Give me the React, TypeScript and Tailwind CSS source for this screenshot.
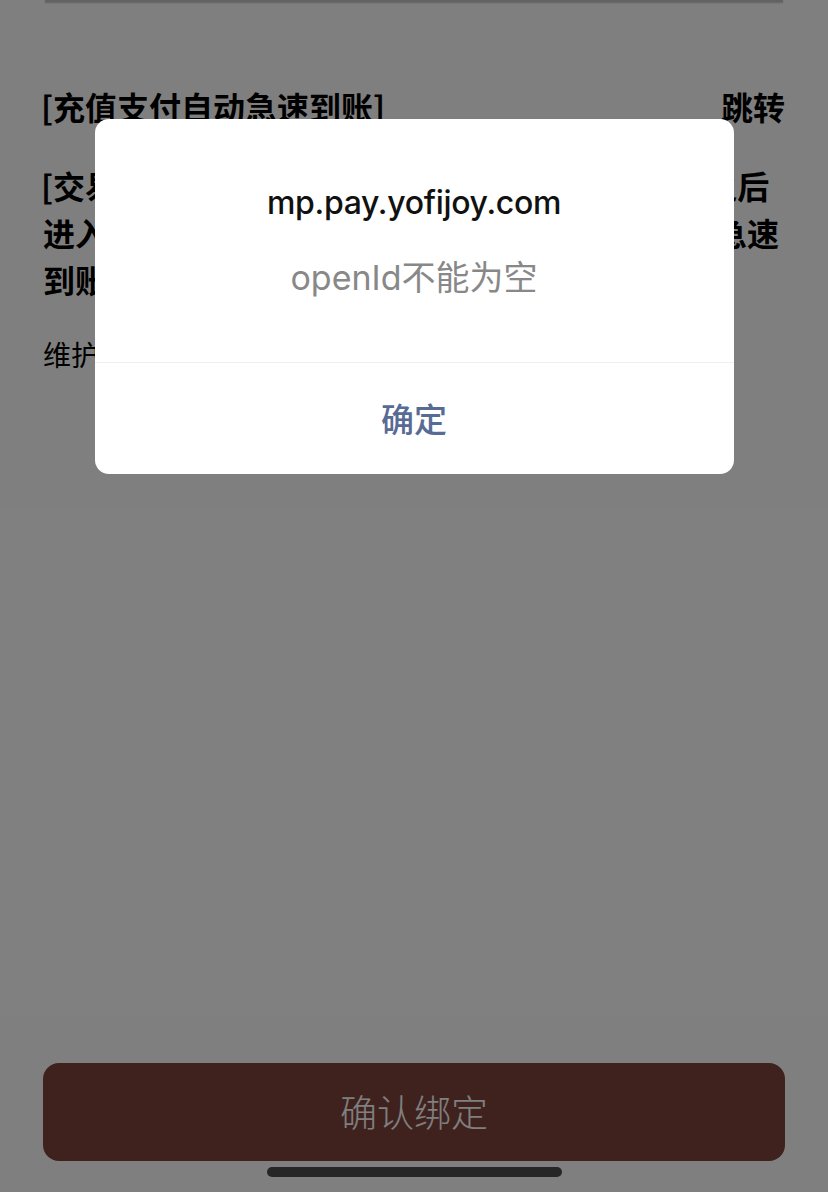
import React from "react";

const cjk = { fontFamily: '"Noto Sans CJK SC", "Noto Sans", sans-serif' };
const latin = { fontFamily: 'Inter, "Noto Sans CJK SC", sans-serif' };

export default function App() {
  return (
    <div className="relative h-[1192px] w-full overflow-hidden bg-white" style={cjk}>
      {/* page */}
      <div className="flex h-full flex-col px-[43px]">
        <div className="mx-[2px] h-[2px] bg-[#c4c4c4] shadow-[0_1px_2px_rgba(0,0,0,0.25)]" />
        <div className="mt-[81px] flex items-center justify-between text-[32px] font-bold leading-[46px] text-black">
          <span className="-ml-[2px]">[充值支付自动急速到账]</span>
          <span>跳转</span>
        </div>
        <div className="mt-[33px] text-[32px] font-bold leading-[47px] text-black">
          <div className="-ml-[2px] whitespace-nowrap">[交易提示]充值订单在完成支付并经过系统确认之后</div>
          <div className="whitespace-nowrap">进入自动处理流程，金额将在一至三分钟内完成急速</div>
          <div className="whitespace-nowrap">到账，请耐心等待。</div>
        </div>
        <div className="mt-[31px] text-[28px] leading-[40px] text-black">维护人员：客服中心</div>
        <div className="flex-1" />
        <button className="mb-[31px] flex h-[98px] w-full items-center justify-center rounded-[16px] bg-[#7e443c] text-[37px] font-light text-white">
          确认绑定
        </button>
      </div>

      {/* overlay */}
      <div className="absolute inset-0 bg-black/50" />

      {/* dialog */}
      <div className="absolute left-0 right-0 top-[119px] flex justify-center">
        <div className="w-[639px] overflow-hidden rounded-[14px] bg-white text-center">
          <div className="pt-[64px] text-[32px] font-medium leading-[40px] tracking-[-0.3px] text-[#111]" style={latin}>
            mp.pay.yofijoy.com
          </div>
          <div className="mt-[35px] text-[34px] leading-[40px] text-[#888]" style={latin}>
            openId不能为空
          </div>
          <div className="mt-[64px] border-t border-[#efefef]" />
          <div className="flex h-[111px] items-center justify-center text-[33px] font-medium text-[#576b95]" style={cjk}>
            确定
          </div>
        </div>
      </div>

      {/* home indicator */}
      <div className="absolute bottom-[15px] left-[267px] h-[10px] w-[295px] rounded-full bg-[#262626]" />
    </div>
  );
}
